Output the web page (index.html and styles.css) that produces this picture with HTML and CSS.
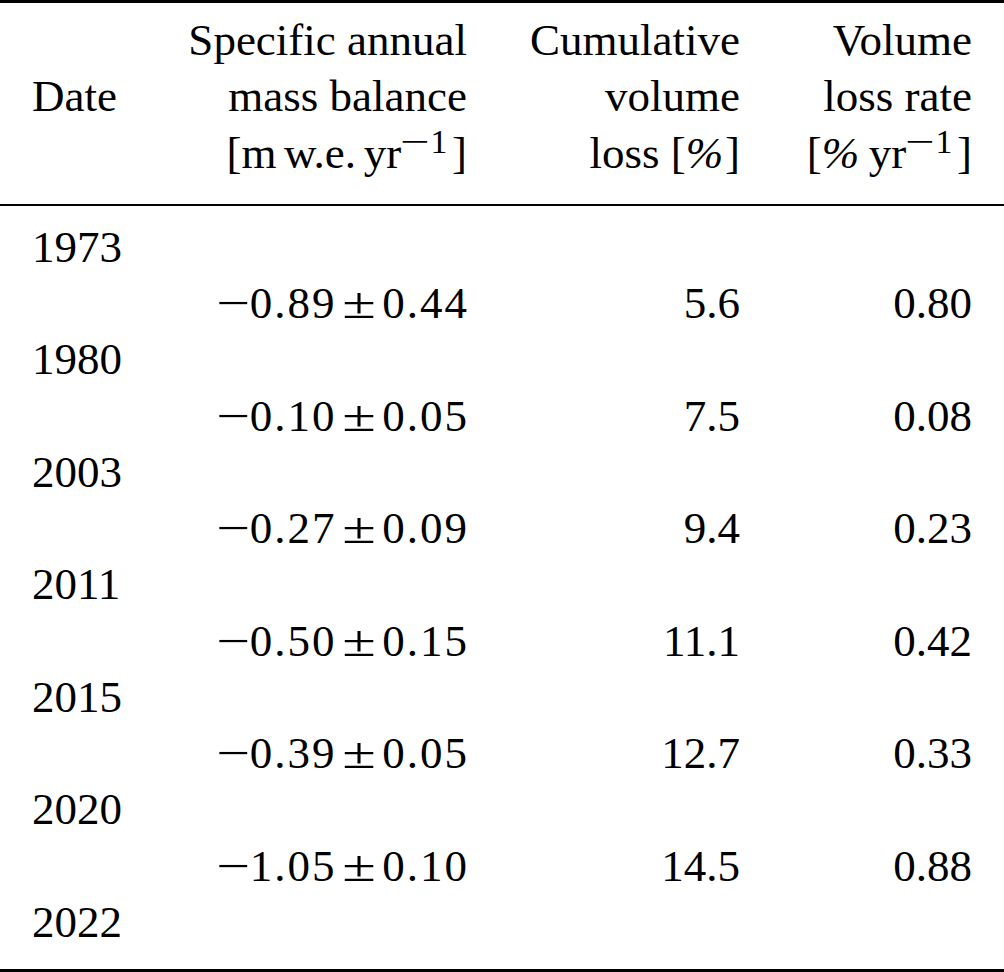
FILE: index.html
```html
<!DOCTYPE html>
<html lang="en">
<head>
<meta charset="utf-8">
<title>Mass balance and volume loss</title>
<link rel="stylesheet" href="styles.css">
</head>
<body>
<table class="tbl">
  <colgroup>
    <col class="c1"><col class="c2"><col class="c3"><col class="c4">
  </colgroup>
  <thead>
    <tr>
      <th class="left">Date</th>
      <th>Specific annual<br>mass balance<br>[m<span class="th"></span>w.e.<span class="th"></span>yr<sup><span class="smn">−</span>1</sup>]</th>
      <th>Cumulative<br>volume<br>loss [<span class="pc">%</span>]</th>
      <th>Volume<br>loss rate<br>[<span class="pc">%</span><span class="th"></span>yr<sup><span class="smn">−</span>1</sup>]</th>
    </tr>
  </thead>
  <tbody>
    <tr><td class="left">1973</td><td></td><td></td><td></td></tr>
    <tr><td></td><td><span class="math"><span class="mn">−</span>0.89<span class="pm">±</span>0.44</span></td><td>5.6</td><td>0.80</td></tr>
    <tr><td class="left">1980</td><td></td><td></td><td></td></tr>
    <tr><td></td><td><span class="math"><span class="mn">−</span>0.10<span class="pm">±</span>0.05</span></td><td>7.5</td><td>0.08</td></tr>
    <tr><td class="left">2003</td><td></td><td></td><td></td></tr>
    <tr><td></td><td><span class="math"><span class="mn">−</span>0.27<span class="pm">±</span>0.09</span></td><td>9.4</td><td>0.23</td></tr>
    <tr><td class="left">2011</td><td></td><td></td><td></td></tr>
    <tr><td></td><td><span class="math"><span class="mn">−</span>0.50<span class="pm">±</span>0.15</span></td><td>11.1</td><td>0.42</td></tr>
    <tr><td class="left">2015</td><td></td><td></td><td></td></tr>
    <tr><td></td><td><span class="math"><span class="mn">−</span>0.39<span class="pm">±</span>0.05</span></td><td>12.7</td><td>0.33</td></tr>
    <tr><td class="left">2020</td><td></td><td></td><td></td></tr>
    <tr><td></td><td><span class="math"><span class="mn">−</span>1.05<span class="pm">±</span>0.10</span></td><td>14.5</td><td>0.88</td></tr>
    <tr><td class="left">2022</td><td></td><td></td><td></td></tr>
  </tbody>
</table>
</body>
</html>
```

FILE: styles.css
```css
html, body {
  margin: 0;
  padding: 0;
  background: #ffffff;
}

body {
  font-family: "Liberation Serif", "Times New Roman", serif;
  font-size: 45px;
  color: #000000;
}

.tbl {
  width: 1004px;
  border-collapse: collapse;
  table-layout: fixed;
  border-top: 3px solid #000;
  border-bottom: 3px solid #000;
}

.c1 { width: 187px; }
.c2 { width: 280px; }
.c3 { width: 273px; }
.c4 { width: 264px; }

.tbl th,
.tbl td {
  padding: 0;
  text-align: right;
  font-weight: normal;
  line-height: 56.25px;
  white-space: nowrap;
}

.tbl th.left,
.tbl td.left {
  text-align: left;
  padding-left: 32px;
}

.tbl th:last-child,
.tbl td:last-child {
  padding-right: 32px;
}

.tbl thead th {
  padding-top: 9px;
  padding-bottom: 23px;
  border-bottom: 2px solid #000;
  vertical-align: middle;
}

.tbl tbody td {
  height: 56.25px;
  vertical-align: top;
}

.tbl tbody tr:first-child td {
  padding-top: 13px;
}

.tbl tbody tr:last-child td {
  padding-bottom: 19px;
}

.th {
  display: inline-block;
  width: 0.17em;
}

.pc {
  font-style: italic;
  margin-right: 0.04em;
}

sup {
  font-size: 0.75em;
  line-height: 0;
  vertical-align: 0.44em;
  margin-left: 0;
  margin-right: 0.14em;
}

.smn {
  display: inline-block;
  transform: scaleX(1.55);
  margin: 0 0.2em 0 0.1em;
}

.math {
  letter-spacing: 2px;
  margin-right: -2px;
}

.mn {
  display: inline-block;
  transform: scaleX(1.33);
  margin: 0 1px 0 4px;
}

.pm {
  display: inline-block;
  transform: scaleX(1.36);
  margin: 0 9px 0 10px;
}
```
